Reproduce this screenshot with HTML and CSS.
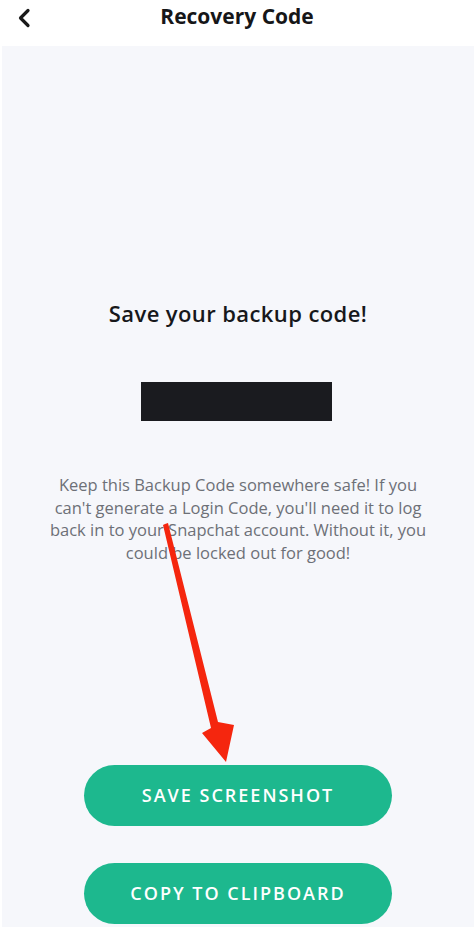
FILE: index.html
```html
<!DOCTYPE html>
<html lang="en">
<head>
<meta charset="utf-8">
<title>Recovery Code</title>
<link rel="stylesheet" href="styles.css">
</head>
<body>
<div class="screen">
  <header class="topbar">
    <button class="back" aria-label="Back">
      <svg width="14" height="20" viewBox="0 0 14 20"><path d="M11 2.5 L3.5 10 L11 17.5" fill="none" stroke="#1a1a1a" stroke-width="3.2" stroke-linecap="round" stroke-linejoin="round"/></svg>
    </button>
    <h1 class="title">Recovery Code</h1>
  </header>
  <main class="content">
    <h2 class="heading">Save your backup code!</h2>
    <div class="code"></div>
    <p class="info">Keep this Backup Code somewhere safe! If you can't generate a Login Code, you'll need it to log back in to your Snapchat account. Without it, you could be locked out for good!</p>
    <div class="actions">
      <button class="btn">SAVE SCREENSHOT</button>
      <button class="btn">COPY TO CLIPBOARD</button>
    </div>
    <svg class="arrow" width="474" height="929" viewBox="0 0 474 929">
      <path d="M165 524 L168 523 L218 722 L234 725 L226 762 L202 733 L211 728 L163 525 Z" fill="#f5260e"/>
    </svg>
  </main>
</div>
</body>
</html>
```
FILE: styles.css
```css
* { box-sizing: border-box; }
html, body { margin: 0; padding: 0; }
body {
  width: 474px;
  height: 929px;
  background: #ffffff;
  font-family: "Open Sans", Lato, sans-serif;
  overflow: hidden;
}
.screen {
  position: relative;
  width: 474px;
  height: 929px;
  display: flex;
  flex-direction: column;
}
.topbar {
  height: 46px;
  flex: none;
  display: flex;
  align-items: center;
  justify-content: center;
  position: relative;
}
.back {
  position: absolute;
  left: 16px;
  top: 7px;
  width: 16px;
  height: 22px;
  padding: 0;
  border: 0;
  background: none;
  display: flex;
  align-items: center;
  justify-content: center;
}
.title {
  margin: 0 0 14px 0;
  font-size: 21px;
  line-height: 26px;
  font-weight: 700;
  color: #161618;
}
.content {
  flex: none;
  height: 881px;
  margin-left: 2px;
  background: #f6f7fb;
  display: flex;
  flex-direction: column;
  align-items: center;
  padding-top: 254px;
}
.heading {
  margin: 0;
  font-size: 22px;
  line-height: 26px;
  font-weight: 600;
  color: #17181b;
  letter-spacing: 0.4px;
}
.code {
  margin-top: 56px;
  margin-left: -4px;
  width: 191px;
  height: 39px;
  background: #1a1b1f;
}
.info {
  margin: 53px 0 0 0;
  width: 392px;
  text-align: center;
  font-size: 16.5px;
  line-height: 22.7px;
  color: #6d7077;
}
.actions {
  margin-top: 200px;
  display: flex;
  flex-direction: column;
  gap: 37px;
}
.btn {
  width: 308px;
  height: 61px;
  border: 0;
  border-radius: 31px;
  background: #1db88e;
  color: #ffffff;
  font-family: "Open Sans", Lato, sans-serif;
  font-size: 18px;
  font-weight: 600;
  letter-spacing: 2px;
  padding: 0;
}
.arrow {
  position: absolute;
  left: 0;
  top: 0;
  pointer-events: none;
}
```
